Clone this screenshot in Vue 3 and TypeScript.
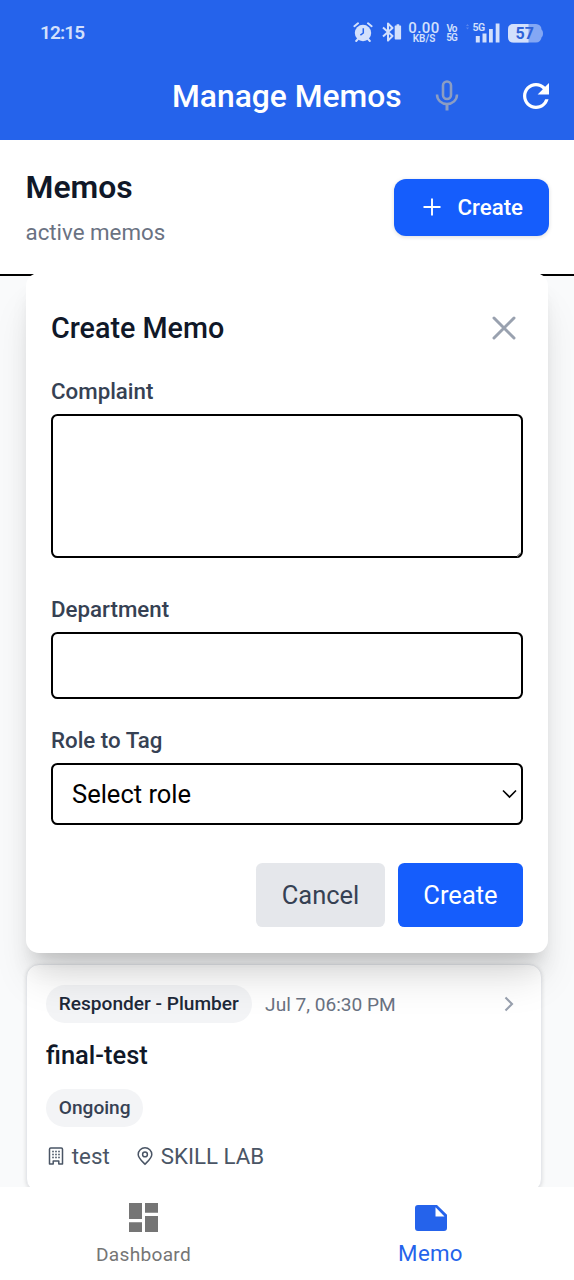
<script setup lang="ts">
import { ref } from 'vue'

interface Memo {
  role: string
  date: string
  title: string
  status: string
  department: string
  place: string
}

const memo: Memo = {
  role: 'Responder - Plumber',
  date: 'Jul 7, 06:30 PM',
  title: 'final-test',
  status: 'Ongoing',
  department: 'test',
  place: 'SKILL LAB',
}

const complaint = ref('')
const department = ref('')
const windowDots: number[][] = [6.5, 10, 13.5].flatMap((y) => [8, 12, 16].map((x) => [x, y]))
</script>

<template>
  <div class="screen">
    <header class="top">
      <div class="status-bar">
        <span class="clock">12:15</span>
        <div class="indicators">
          <svg class="alarm" viewBox="0 0 20 20" width="20" height="20">
            <circle cx="10" cy="11" r="8.200" fill="currentColor" />
            <path d="M1.400 4.200 5 1.300M18.600 4.200 15 1.300M5 17l-1.800 2M15 17l1.800 2" stroke="currentColor" stroke-width="2" stroke-linecap="round" />
            <path d="M10.3 6.3V11L7.4 13.2" fill="none" stroke="#2563eb" stroke-width="1.5" />
          </svg>
          <svg class="bluetooth" viewBox="0 0 20 20" width="20" height="20">
            <path d="M1 5.6 10.500 14 6 18.6V1.4L10.500 6 1 14.4" fill="none" stroke="currentColor" stroke-width="2" stroke-linejoin="round" />
            <path d="M14.6 2.2h2.600V3.4h1.200q.7 0 .7.7v12.700q0 .7-.7.7h-5q-.7 0-.7-.7V4.100q0-.7.7-.7h1.200z" fill="currentColor" />
          </svg>
          <div class="stack speed"><span class="speed-value">0.00</span><span class="speed-unit">KB/S</span></div>
          <div class="stack volte"><span>Vo</span><span>5G</span></div>
          <div class="signal">
            <span class="net">5G</span>
            <svg viewBox="0 0 34 21" width="34" height="21">
              <path d="M9.800 14h4v6.500h-4zM16.500 11.500h4v9h-4zM23 7h3.800v13.500H23zM29.700 1.500h3.800v19h-3.800z" fill="currentColor" />
              <path d="M0 4l1.500-2L3 4zM0 5.500l1.500 2 1.500-2z" fill="currentColor" opacity=".28" />
            </svg>
          </div>
          <div class="battery">
            <svg viewBox="0 0 36 19" width="36" height="19">
              <rect x="0" y="0" width="33.500" height="18.500" rx="5.500" fill="#84a7f4" />
              <path d="M33 5.500q2 .5 2 4t-2 4z" fill="#84a7f4" />
              <path d="M5.500 0H20.500v18.500H5.500Q0 18.500 0 13V5.500Q0 0 5.500 0z" fill="currentColor" />
            </svg>
            <span>57</span>
          </div>
        </div>
      </div>
      <div class="app-bar">
        <h1>Manage Memos</h1>
        <svg class="mic" viewBox="0 0 24 32" width="24" height="32">
          <rect x="8" y="1.500" width="8" height="17.500" rx="4" fill="none" stroke="currentColor" stroke-width="2.600" />
          <path d="M2 14.500C2 20 6.500 24 12 24s10-4 10-9.500" fill="none" stroke="currentColor" stroke-width="2.500" />
          <path d="M12 24v6.500" stroke="currentColor" stroke-width="3" />
        </svg>
        <svg class="refresh" viewBox="4 4 16 16" width="26" height="26">
          <path d="M17.650 6.350A7.958 7.958 0 0 0 12 4c-4.420 0-7.990 3.580-7.990 8s3.570 8 7.990 8c3.730 0 6.840-2.550 7.730-6h-2.080A5.990 5.990 0 0 1 12 18c-3.310 0-6-2.690-6-6s2.690-6 6-6c1.660 0 3.140.69 4.220 1.780L13 11h7V4z" fill="currentColor" />
        </svg>
      </div>
    </header>

    <section class="page-head">
      <div class="heading">
        <h2>Memos</h2>
        <p>active memos</p>
      </div>
      <button class="new-memo">
        <svg viewBox="0 0 18 18" width="18" height="18"><path d="M9 .5v17M.5 9h17" stroke="currentColor" stroke-width="1.900" /></svg>
        <span>Create</span>
      </button>
    </section>

    <main class="list">
      <article class="card">
        <div class="card-top">
          <span class="pill role">{{ memo.role }}</span>
          <time>{{ memo.date }}</time>
          <svg class="chevron" viewBox="0 0 12 18" width="12" height="18"><path d="M2.500 2.500 9 9l-6.500 6.500" fill="none" stroke="currentColor" stroke-width="2.100" /></svg>
        </div>
        <h4>{{ memo.title }}</h4>
        <div class="card-status"><span class="pill state">{{ memo.status }}</span></div>
        <div class="meta">
          <svg class="building" viewBox="0 0 18 20" width="18" height="20">
            <path d="M6.200 18V15h5.600v3H15.500V3.200q0-1.200-1.200-1.200H3.700q-1.200 0-1.200 1.200V18z" fill="none" stroke="currentColor" stroke-width="1.500" stroke-linejoin="round" />
            <rect v-for="(d, i) in windowDots" :key="i" :x="d[0] * 0.750 - 0.800" :y="d[1] * 0.850 - 0.800" width="1.600" height="1.600" fill="currentColor" />
          </svg>
          <span class="dept">{{ memo.department }}</span>
          <svg class="pin" viewBox="0 0 18 20" width="18" height="20">
            <path d="M9 18.200C6.500 15.500 2.200 12 2.200 8.400a6.800 6.600 0 0 1 13.600 0c0 3.600-4.300 7.100-6.800 9.800z" fill="none" stroke="currentColor" stroke-width="1.500" />
            <circle cx="9" cy="8.400" r="2.400" fill="none" stroke="currentColor" stroke-width="1.500" />
          </svg>
          <span class="place">{{ memo.place }}</span>
        </div>
      </article>
    </main>

    <div class="dialog">
      <div class="dialog-head">
        <h3>Create Memo</h3>
        <svg viewBox="0 0 26 26" width="26" height="26"><path d="M3 3l20 20M23 3 3 23" stroke="currentColor" stroke-width="3" stroke-linecap="round" /></svg>
      </div>
      <label for="complaint">Complaint</label>
      <div class="area">
        <textarea id="complaint" v-model="complaint"></textarea>
        <svg class="grip" viewBox="0 0 4 4" width="4" height="4"><path d="M0 3.500 3.500 0" stroke="#777" stroke-width="1.200" /></svg>
      </div>
      <label for="department">Department</label>
      <input id="department" v-model="department" type="text" />
      <label for="role">Role to Tag</label>
      <div id="role" class="select">
        <span>Select role</span>
        <svg viewBox="0 0 15 10" width="15" height="10"><path d="M1 1.500l6.500 6.500L14 1.500" fill="none" stroke="currentColor" stroke-width="1.600" /></svg>
      </div>
      <div class="actions">
        <button class="cancel"><span>Cancel</span></button>
        <button class="submit"><span>Create</span></button>
      </div>
    </div>

    <nav class="tabs">
      <div class="tab">
        <svg viewBox="0 0 29 29" width="29" height="29"><path d="M0 0h13v16H0zM16 0h13v9.700H16zM0 19.300h13V29H0zM16 13h13v16H16z" fill="currentColor" /></svg>
        <span>Dashboard</span>
      </div>
      <div class="tab active">
        <svg viewBox="0 0 32 26" width="32" height="26"><path fill-rule="evenodd" d="M3 0H22L32 9.800V23q0 3-3 3H3q-3 0-3-3V3Q0 0 3 0zM20.500 2.300V11.500h9z" fill="currentColor" /></svg>
        <span>Memo</span>
      </div>
    </nav>
  </div>
</template>

<style>
body {
  margin: 0;
}
</style>

<style scoped>
.screen {
  position: relative;
  display: flex;
  flex-direction: column;
  width: 574px;
  height: 1280px;
  overflow: hidden;
  background: #f9fafb;
  font-family: Roboto, "Liberation Sans", sans-serif;
  color: #101828;
}
* {
  box-sizing: border-box;
}
h1, h2, h3, h4, p {
  margin: 0;
}
svg {
  display: block;
  flex: none;
}
span, time, h1, h2, h3, h4, p, label {
  white-space: nowrap;
}
button {
  display: flex;
  align-items: center;
  justify-content: center;
  border: 0;
  padding: 0;
  font-family: inherit;
}
.top {
  flex: none;
  height: 140.400px;
  background: #2563eb;
  color: #fff;
}
.status-bar {
  display: flex;
  justify-content: space-between;
  height: 63px;
  padding: 0 30px 0 40px;
  color: #d3e0fc;
}
.clock {
  line-height: 66px;
  font-size: 19px;
  font-weight: 600;
  letter-spacing: -0.900px;
}
.indicators {
  display: flex;
  align-items: flex-start;
  padding-top: 22px;
}
.bluetooth {
  margin-left: 9px;
}
.stack {
  display: flex;
  flex-direction: column;
  align-items: center;
  font-weight: 500;
}
.speed {
  width: 32px;
  margin-left: 6px;
}
.speed-value {
  height: 12px;
  font-size: 15px;
  line-height: 13px;
  letter-spacing: 0.500px;
}
.speed-unit {
  height: 10px;
  font-size: 10px;
  line-height: 10px;
  font-weight: 600;
}
.volte {
  width: 12px;
  margin-left: 5.500px;
  padding-top: 1.500px;
  font-size: 10px;
  line-height: 9.500px;
  font-weight: 600;
  letter-spacing: -0.900px;
}
.signal {
  position: relative;
  margin-left: 8.500px;
}
.net {
  position: absolute;
  left: 6.500px;
  top: 0;
  font-size: 10.500px;
  line-height: 11px;
  font-weight: 600;
  letter-spacing: -0.500px;
}
.battery {
  position: relative;
  margin: 2px 0 0 8px;
}
.battery span {
  position: absolute;
  left: 7.500px;
  top: 0;
  color: #2f62d8;
  font-size: 16px;
  line-height: 20px;
  font-weight: 700;
}
.app-bar {
  display: flex;
  align-items: center;
  height: 66px;
  padding: 0 25px 0 172px;
}
h1 {
  width: 230px;
  font-size: 31.800px;
  font-weight: 500;
}
.mic {
  margin-left: 32.500px;
  color: #8b9dc3;
}
.refresh {
  margin-left: auto;
}
.page-head {
  display: flex;
  flex: none;
  justify-content: space-between;
  align-items: center;
  height: 135.600px;
  padding: 0 25.500px;
  background: #fff;
  border-bottom: 2px solid #000;
}
h2 {
  font-size: 31.900px;
  line-height: 45px;
  font-weight: 600;
}
.heading {
  margin-top: -2px;
}
.heading p {
  padding-top: 6px;
  font-size: 22.300px;
  line-height: 32px;
  color: #6a7282;
}
.new-memo {
  width: 154.500px;
  height: 57px;
  padding-left: 4px;
  gap: 16px;
  border-radius: 12px;
  background: #155dfc;
  color: #fff;
  font-size: 22.300px;
  font-weight: 500;
  box-shadow: 0 1px 4px rgba(0, 0, 0, 0.14);
}
.list {
  flex: 1;
  padding: 688.500px 32px 0 25.500px;
}
.card {
  height: 228px;
  padding: 20px 19px 0 19.500px;
  border: 1.600px solid #e5e7eb;
  border-radius: 13px;
  background: #fff;
  box-shadow: 0 1px 4px rgba(0, 0, 0, 0.13);
}
.card-top {
  display: flex;
  align-items: center;
}
.pill {
  display: inline-block;
  height: 38px;
  padding: 0 12.800px;
  border-radius: 19px;
  background: #f3f4f6;
  font-size: 19.100px;
  line-height: 38px;
  font-weight: 500;
}
.role {
  color: #1e2939;
}
.state {
  color: #364153;
}
time {
  margin-left: 13.500px;
  color: #6a7282;
  font-size: 19.100px;
}
.chevron {
  margin: 0 7px 0 auto;
  color: #99a1af;
}
h4 {
  margin-top: 13px;
  font-size: 25.500px;
  line-height: 38px;
  font-weight: 500;
}
.card-status {
  height: 38px;
  margin-top: 15px;
}
.meta {
  display: flex;
  align-items: center;
  height: 32px;
  margin-top: 12.500px;
  padding-left: 0.800px;
  color: #4a5565;
  font-size: 22.300px;
}
.dept {
  margin-left: 7px;
}
.pin {
  margin-left: 26.500px;
}
.place {
  margin-left: 6.500px;
}
.dialog {
  position: absolute;
  left: 25.500px;
  top: 272.500px;
  display: flex;
  flex-direction: column;
  width: 522.500px;
  height: 680px;
  padding: 32.500px 25.500px 0;
  border-radius: 13px;
  background: #fff;
  box-shadow: 0 32px 40px -8px rgba(0, 0, 0, 0.13), 0 13px 16px -10px rgba(0, 0, 0, 0.14), 0 20px 20px rgba(0, 0, 0, 0.04);
}
.dialog-head {
  display: flex;
  align-items: center;
  justify-content: space-between;
  height: 45px;
  padding-right: 6px;
  color: #99a1af;
}
h3 {
  color: #101828;
  font-size: 28.700px;
  font-weight: 500;
}
label {
  height: 32px;
  color: #364153;
  font-size: 22.300px;
  line-height: 32px;
  font-weight: 500;
}
.dialog-head + label {
  margin-top: 24.500px;
}
.area {
  position: relative;
  height: 144px;
  margin: 7.500px 0 35px;
}
.grip {
  position: absolute;
  right: 1.500px;
  bottom: 1.500px;
}
textarea, input {
  display: block;
  width: 472px;
  margin: 0;
  padding: 12px 20px;
  border: 2px solid #000;
  border-radius: 6.400px;
  background: #fff;
  outline: none;
  font: 25.500px Roboto, sans-serif;
}
textarea {
  height: 144px;
  resize: none;
}
input {
  height: 67px;
  margin: 7px 0 25px;
}
.select {
  display: flex;
  align-items: center;
  justify-content: space-between;
  height: 62px;
  margin-top: 7px;
  padding: 0 4px 0 19px;
  border: 2px solid #000;
  border-radius: 6.400px;
  color: #000;
  font-size: 25.500px;
}
.actions {
  display: flex;
  justify-content: flex-end;
  gap: 13px;
  margin-top: 38.400px;
}
.actions button {
  height: 63.500px;
  padding-left: 1px;
  border-radius: 6.400px;
  font-size: 25.500px;
}
.cancel {
  width: 129px;
  background: #e5e7eb;
  color: #364153;
}
.submit {
  width: 125px;
  background: #155dfc;
  color: #fff;
}
.tabs {
  position: absolute;
  left: 0;
  bottom: 0;
  display: flex;
  width: 574px;
  height: 93px;
  background: #fff;
}
.tab {
  display: flex;
  flex: 1;
  flex-direction: column;
  align-items: center;
  padding-top: 16px;
  color: #757575;
  font-size: 19.100px;
  letter-spacing: 0.300px;
}
.tab span {
  margin-top: 11px;
  line-height: 24px;
}
.active {
  padding-top: 18px;
  color: #2563eb;
  font-size: 22.300px;
  letter-spacing: 0.300px;
}
.active span {
  margin-top: 10px;
}
</style>
